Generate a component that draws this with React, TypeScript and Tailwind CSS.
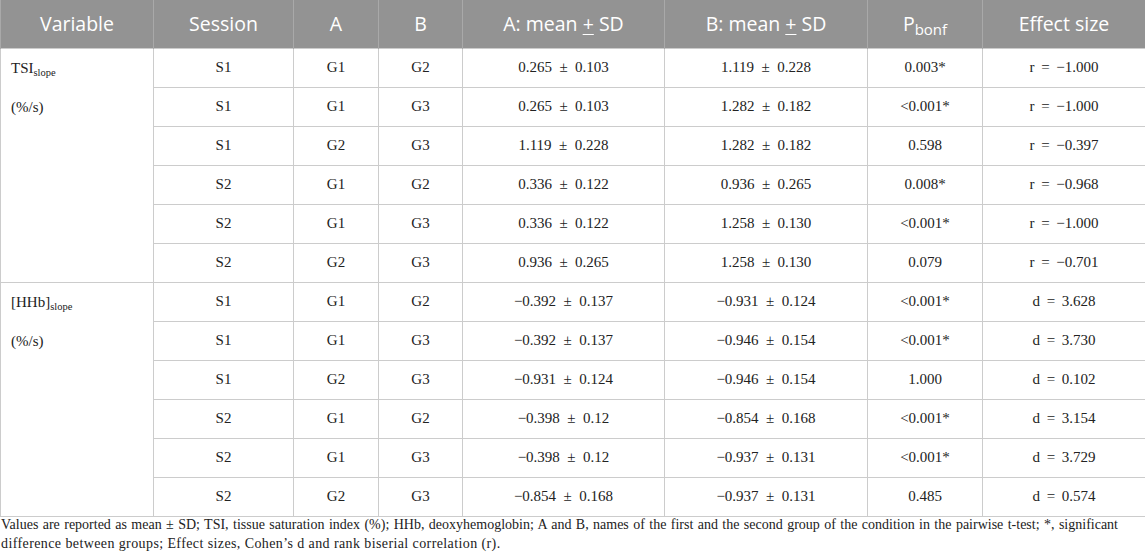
import React from "react";

type Row = [string, string, string, string, string, string, string];

const group1: Row[] = [
  ["S1", "G1", "G2", "0.265 ± 0.103", "1.119 ± 0.228", "0.003*", "r = −1.000"],
  ["S1", "G1", "G3", "0.265 ± 0.103", "1.282 ± 0.182", "<0.001*", "r = −1.000"],
  ["S1", "G2", "G3", "1.119 ± 0.228", "1.282 ± 0.182", "0.598", "r = −0.397"],
  ["S2", "G1", "G2", "0.336 ± 0.122", "0.936 ± 0.265", "0.008*", "r = −0.968"],
  ["S2", "G1", "G3", "0.336 ± 0.122", "1.258 ± 0.130", "<0.001*", "r = −1.000"],
  ["S2", "G2", "G3", "0.936 ± 0.265", "1.258 ± 0.130", "0.079", "r = −0.701"],
];

const group2: Row[] = [
  ["S1", "G1", "G2", "−0.392 ± 0.137", "−0.931 ± 0.124", "<0.001*", "d = 3.628"],
  ["S1", "G1", "G3", "−0.392 ± 0.137", "−0.946 ± 0.154", "<0.001*", "d = 3.730"],
  ["S1", "G2", "G3", "−0.931 ± 0.124", "−0.946 ± 0.154", "1.000", "d = 0.102"],
  ["S2", "G1", "G2", "−0.398 ± 0.12", "−0.854 ± 0.168", "<0.001*", "d = 3.154"],
  ["S2", "G1", "G3", "−0.398 ± 0.12", "−0.937 ± 0.131", "<0.001*", "d = 3.729"],
  ["S2", "G2", "G3", "−0.854 ± 0.168", "−0.937 ± 0.131", "0.485", "d = 0.574"],
];

const serif = { fontFamily: '"Liberation Serif", "Times New Roman", serif' };

function VarCell({ name }: { name: string }) {
  return (
    <td
      rowSpan={6}
      className="border border-[#cccccc] align-top pl-[10px] text-left text-[15px] text-[#222]"
    >
      <div className="h-[39px] leading-[39px]">
        {name}
        <sub className="text-[10.5px] align-baseline relative top-[3px]">slope</sub>
      </div>
      <div className="h-[39px] leading-[39px]">(%/s)</div>
    </td>
  );
}

function fmt(c: string) {
  return c.replace(" ± ", "  ±  ").replace(" = ", "\u2009 = \u2009");
}

function DataRows({ rows, name }: { rows: Row[]; name: string }) {
  return (
    <>
      {rows.map((r, i) => (
        <tr key={i} className="h-[39px]">
          {i === 0 && <VarCell name={name} />}
          {r.map((c, j) => (
            <td
              key={j}
              className="border border-[#cccccc] text-center text-[15px] text-[#222] p-0 whitespace-pre"
            >
              {fmt(c)}
            </td>
          ))}
        </tr>
      ))}
    </>
  );
}

export default function App() {
  const headers = ["Variable", "Session", "A", "B", "A: mean ± SD", "B: mean ± SD"];
  return (
    <div className="w-[1145px] h-[555px] bg-white overflow-hidden" style={serif}>
      <table className="w-[1145px] table-fixed border-collapse">
        <colgroup>
          <col className="w-[153px]" />
          <col className="w-[140px]" />
          <col className="w-[85px]" />
          <col className="w-[84px]" />
          <col className="w-[202px]" />
          <col className="w-[203px]" />
          <col className="w-[115px]" />
          <col className="w-[163px]" />
        </colgroup>
        <thead>
          <tr
            className="h-[48px] bg-[#939393] text-white text-[19.5px] font-normal"
            style={{ fontFamily: '"Open Sans", "Noto Sans", sans-serif' }}
          >
            {headers.map((h, i) => (
              <th
                key={i}
                className="border-x border-[#a9a9a9] font-normal text-center p-0"
              >
                {h.includes("±") ? (
                  <>
                    {h.split("±")[0]}
                    <span className="underline underline-offset-[3px] decoration-1">+</span>
                    {h.split("±")[1]}
                  </>
                ) : (
                  h
                )}
              </th>
            ))}
            <th className="border-x border-[#a9a9a9] font-normal text-center p-0">
              P<sub className="text-[15px] align-baseline relative top-[4px]">bonf</sub>
            </th>
            <th className="border-x border-[#a9a9a9] font-normal text-center p-0">
              Effect size
            </th>
          </tr>
        </thead>
        <tbody>
          <DataRows rows={group1} name="TSI" />
          <DataRows rows={group2} name="[HHb]" />
        </tbody>
      </table>
      <div className="text-[14px] text-[#222] leading-[19px] mt-[-2px] pl-[1px] pr-[27px]">
        <div className="text-justify [text-align-last:justify] whitespace-nowrap">
          Values are reported as mean ± SD; TSI, tissue saturation index (%); HHb, deoxyhemoglobin; A and B, names of the first and the second group of the condition in the pairwise t-test; *, significant
        </div>
        <div className="tracking-[0.4px]">
          difference between groups; Effect sizes, Cohen’s d and rank biserial correlation (r).
        </div>
      </div>
    </div>
  );
}
